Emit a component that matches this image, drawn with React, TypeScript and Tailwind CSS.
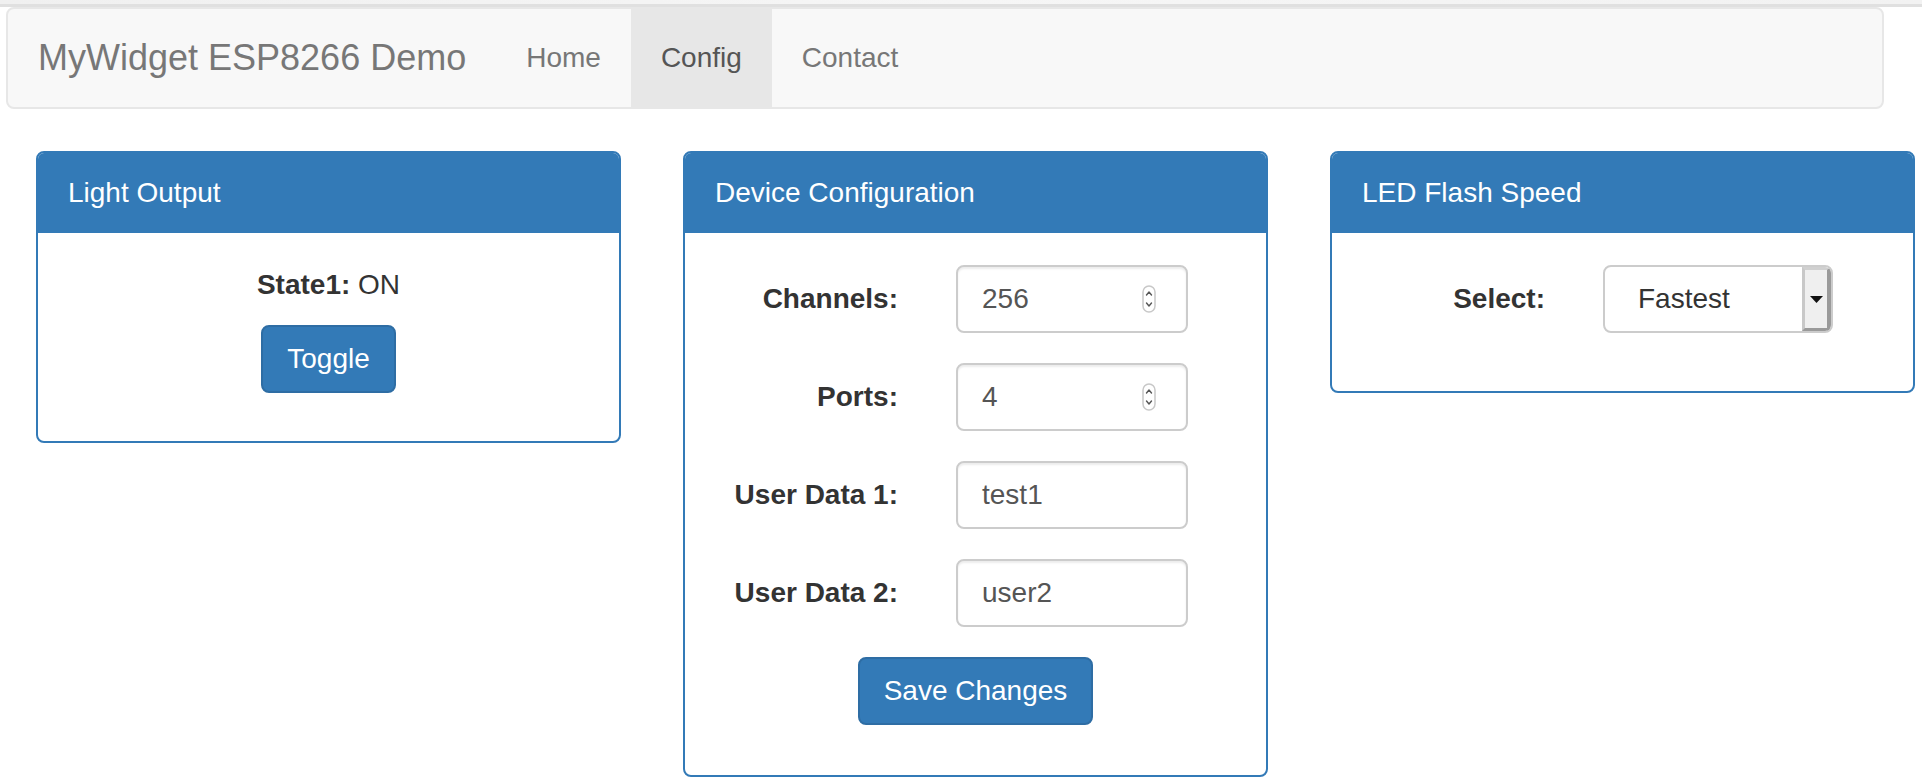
import type { ReactNode } from 'react';

const navLinks = [
  { label: 'Home', active: false },
  { label: 'Config', active: true },
  { label: 'Contact', active: false },
];

function Panel({ title, children, className }: { title: string; children: ReactNode; className?: string }) {
  return (
    <div className="w-[585px] overflow-hidden rounded-[8px] border-2 border-[#337ab7] bg-white">
      <div className="flex h-[80px] items-center bg-[#337ab7] px-[30px] text-[28px] leading-none text-white">{title}</div>
      <div className={className}>{children}</div>
    </div>
  );
}

function Spinner() {
  return (
    <svg width="14" height="28" viewBox="0 0 14 28" className="shrink-0">
      <rect x="1" y="1" width="12" height="26" rx="6" fill="white" stroke="#c8c8c8" strokeWidth="1.5" />
      <path d="M4.5 10 L7 7 L9.5 10" fill="none" stroke="#555" strokeWidth="1.4" strokeLinecap="round" strokeLinejoin="round" />
      <path d="M4.5 18 L7 21 L9.5 18" fill="none" stroke="#555" strokeWidth="1.4" strokeLinecap="round" strokeLinejoin="round" />
    </svg>
  );
}

function FieldRow({ label, children }: { label: string; children: ReactNode }) {
  return (
    <div className="flex h-[68px] items-center">
      <div className="w-[183px] text-right text-[28px] font-bold text-[#333]">{label}</div>
      <div className="ml-[58px]">{children}</div>
    </div>
  );
}

function TextBox({ value, spinner }: { value: string; spinner?: boolean }) {
  return (
    <div className="flex h-[68px] w-[232px] items-center justify-between rounded-[8px] border-2 border-[#ccc] bg-white pl-[24px] pr-[30px] text-[28px] text-[#555] shadow-[inset_0_2px_2px_rgba(0,0,0,0.075)]">
      <span>{value}</span>
      {spinner && <Spinner />}
    </div>
  );
}

export default function App() {
  return (
    <div className="min-h-[782px] bg-white font-['Liberation_Sans',Arial,sans-serif] text-[#333]">
      <div className="h-[7px] border-b-[3px] border-[#e0e0e0] bg-gradient-to-r from-[#f0f0f0] via-[#f6f6f6] to-[#f2f2f2]" />

      <nav className="ml-[6px] flex h-[102px] w-[1878px] items-stretch rounded-[8px] border-2 border-[#e7e7e7] bg-[#f8f8f8]">
        <div className="flex items-center px-[30px] text-[36px] text-[#777]">MyWidget ESP8266 Demo</div>
        {navLinks.map((l) => (
          <div
            key={l.label}
            className={
              l.active
                ? 'flex items-center bg-[#e7e7e7] px-[30px] text-[28px] text-[#555]'
                : 'flex items-center px-[30px] text-[28px] text-[#777]'
            }
          >
            {l.label}
          </div>
        ))}
      </nav>

      <div className="mt-[42px] flex items-start gap-[62px] pl-[36px]">
        <Panel title="Light Output" className="flex flex-col items-center pb-[48px] pt-[32px]">
          <div className="h-[40px] text-[28px] leading-[40px]">
            <span className="font-bold">State1:</span> ON
          </div>
          <button className="mt-[20px] h-[68px] rounded-[8px] border-2 border-[#2e6da4] bg-[#337ab7] px-[24px] text-[28px] text-white">
            Toggle
          </button>
        </Panel>

        <Panel title="Device Configuration" className="flex flex-col px-[30px] pb-[50px] pt-[32px]">
          <div className="flex flex-col gap-[30px]">
            <FieldRow label="Channels:">
              <TextBox value="256" spinner />
            </FieldRow>
            <FieldRow label="Ports:">
              <TextBox value="4" spinner />
            </FieldRow>
            <FieldRow label="User Data 1:">
              <TextBox value="test1" />
            </FieldRow>
            <FieldRow label="User Data 2:">
              <TextBox value="user2" />
            </FieldRow>
          </div>
          <div className="mt-[30px] flex justify-center">
            <button className="h-[68px] rounded-[8px] border-2 border-[#2e6da4] bg-[#337ab7] px-[24px] text-[28px] text-white">
              Save Changes
            </button>
          </div>
        </Panel>

        <Panel title="LED Flash Speed" className="px-[30px] pb-[58px] pt-[32px]">
          <FieldRow label="Select:">
            <div className="flex h-[68px] w-[230px] items-stretch overflow-hidden rounded-[8px] border-2 border-[#ccc] bg-white">
              <div className="flex flex-1 items-center pl-[33px] text-[28px] text-[#333]">Fastest</div>
              <div className="flex w-[29px] items-center justify-center border-b-[3px] border-l-[3px] border-r-[4px] border-t-[3px] border-b-[#9a9a9a] border-l-[#c8c8c8] border-r-[#9a9a9a] border-t-[#d0d0d0] bg-[#efefef]">
                <svg width="13" height="7" viewBox="0 0 13 7">
                  <path d="M0 0 L13 0 L6.5 7 Z" fill="#111" />
                </svg>
              </div>
            </div>
          </FieldRow>
        </Panel>
      </div>
    </div>
  );
}
